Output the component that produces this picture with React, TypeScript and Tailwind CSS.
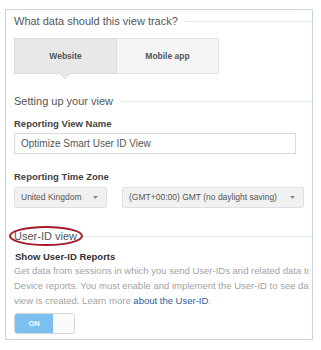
import React from "react";

function SectionTitle({ label, circled }: { label: string; circled?: boolean }) {
  return (
    <div className="flex items-center">
      <span className="relative text-[11px] leading-[13px] text-[#555] whitespace-nowrap">
        {label}
        {circled && (
          <svg
            className="absolute left-[-5px] top-[-4px] w-[74px] h-[20px] overflow-visible"
            viewBox="0 0 74 20"
            fill="none"
          >
            <ellipse cx="37" cy="10" rx="36" ry="9" stroke="#a3192a" strokeWidth="2" />
          </svg>
        )}
      </span>
      <div className={`flex-1 h-px bg-[#e6e9ec] ${circled ? "ml-[6px]" : "ml-[7px]"}`} />
    </div>
  );
}

function Select({ label, width }: { label: string; width: string }) {
  return (
    <div
      className={`${width} h-[21px] flex items-center justify-between pl-[6px] pr-[8px] bg-[#f1f1f1] border border-[#e0e0e0] rounded-[2px] text-[8.5px] text-[#555] whitespace-nowrap`}
    >
      <span>{label}</span>
      <svg width="5" height="3" viewBox="0 0 5 3">
        <path d="M0 0 L5 0 L2.5 3 Z" fill="#888" />
      </svg>
    </div>
  );
}

export default function App() {
  return (
    <div
      className="w-[321px] h-[350px] bg-white pt-[9px] pl-[5px]"
      style={{ fontFamily: '"Liberation Sans", Arial, sans-serif' }}
    >
      <div className="w-[308px] h-[331px] border border-[#c9d5de] overflow-hidden pl-[8px] pt-[5px]">
        <SectionTitle label="What data should this view track?" />

        <div className="relative mt-[10px] flex w-[205px] h-[36px]">
          <div className="w-[103px] h-full flex items-center justify-center bg-[#e8e8e8] border border-[#dcdcdc] text-[8.5px] font-bold text-[#555]">
            Website
          </div>
          <div className="w-[102px] h-full flex items-center justify-center bg-[#f5f5f5] border border-l-0 border-[#e3e3e3] text-[8.5px] font-bold text-[#555]">
            Mobile app
          </div>
          <svg className="absolute left-[45px] top-[35px]" width="12" height="7" viewBox="0 0 12 7">
            <path d="M0 0 L12 0 L6 6 Z" fill="#e8e8e8" />
            <path d="M0 0 L6 6 L12 0" stroke="#dcdcdc" fill="none" />
          </svg>
        </div>

        <div className="mt-[21px]">
          <SectionTitle label="Setting up your view" />
        </div>

        <div className="mt-[10px] text-[9.5px] leading-[12px] font-bold text-[#444]">Reporting View Name</div>
        <div className="mt-[3px] w-[282px] h-[21px] flex items-center pl-[6px] border border-[#d9d9d9] text-[10px] text-[#555]">
          Optimize Smart User ID View
        </div>

        <div className="mt-[17px] text-[9.5px] leading-[12px] font-bold text-[#444]">Reporting Time Zone</div>
        <div className="mt-[4px] flex gap-[15px]">
          <Select label="United Kingdom" width="w-[93px]" />
          <Select label="(GMT+00:00) GMT (no daylight saving)" width="w-[182px]" />
        </div>

        <div className="mt-[22px]">
          <SectionTitle label="User-ID view" circled />
        </div>

        <div className="mt-[8px] text-[9.5px] leading-[12px] font-bold text-[#333] pl-[1px]">Show User-ID Reports</div>
        <div className="text-[9.5px] leading-[15px] text-[#a3a3a3] whitespace-nowrap overflow-hidden mr-[3px]">
          <div>Get data from sessions in which you send User-IDs and related data to the User-ID and Cross</div>
          <div>Device reports. You must enable and implement the User-ID to see data in these reports.</div>
          <div>
            view is created. Learn more <span className="text-[#2d5c9a]">about the User-ID</span>.
          </div>
        </div>

        <div className="mt-[5px] flex w-[61px] h-[21px] rounded-[3px] border border-[#d6d6d6] overflow-hidden">
          <div className="w-[38px] h-full bg-[#7cc0f2] flex items-center justify-center text-[7.5px] font-bold text-white">
            ON
          </div>
          <div className="flex-1 bg-[#fafafa]" />
        </div>
      </div>
    </div>
  );
}
